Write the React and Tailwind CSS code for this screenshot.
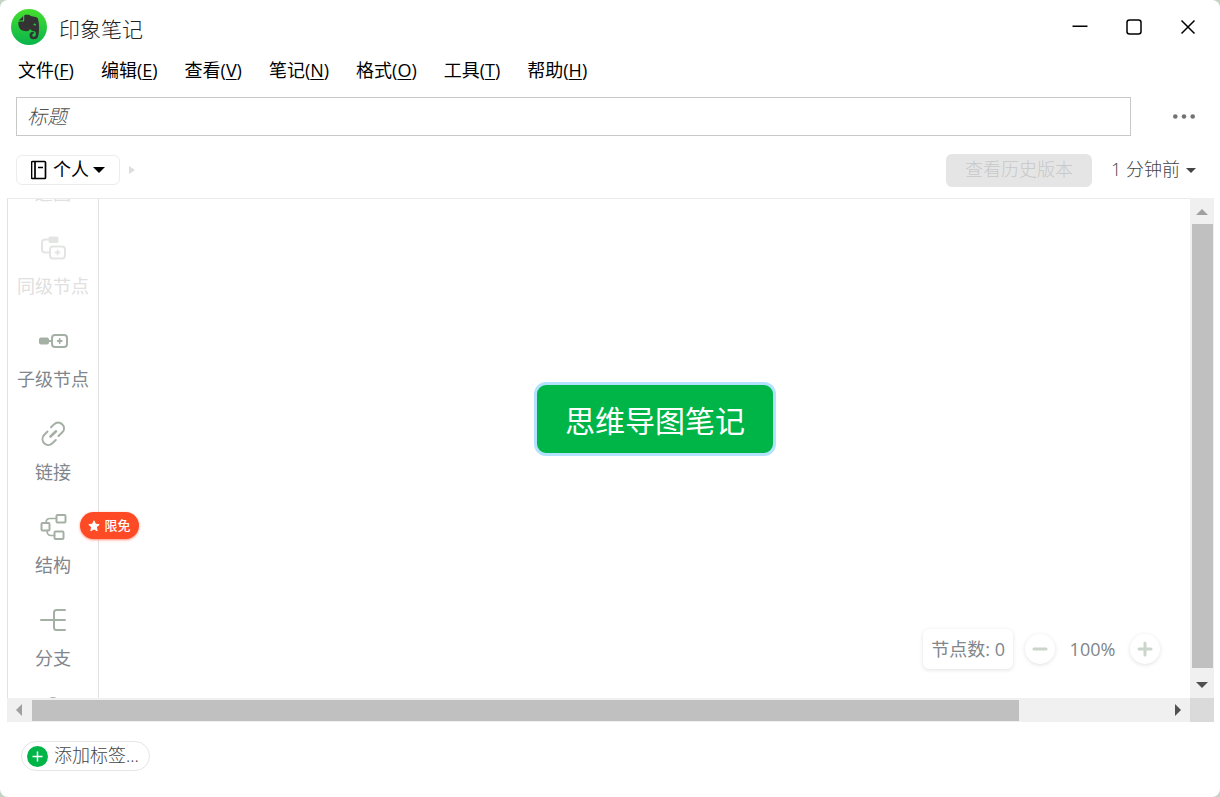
const menus = [
    { label: '文件', key: 'F' },
    { label: '编辑', key: 'E' },
    { label: '查看', key: 'V' },
    { label: '笔记', key: 'N' },
    { label: '格式', key: 'O' },
    { label: '工具', key: 'T' },
    { label: '帮助', key: 'H' },
];

function BrandLogo() {
    return (
        <svg width="36" height="36" viewBox="0 0 36 36" aria-hidden="true">
            <defs>
                <linearGradient id="brand" x1="0" y1="0" x2="0" y2="1">
                    <stop offset="0" stopColor="#45df2e" />
                    <stop offset="1" stopColor="#08b44c" />
                </linearGradient>
            </defs>
            <circle cx="18" cy="18" r="18" fill="url(#brand)" />
            <path
                fill="#333"
                d="M13.2 6.9 C13.2 6 13.9 5.7 15 5.7 H17.4 C18.7 5.7 19.4 6.5 19.7 7.1 L24.6 7.9 C26 8.1 26.8 8.9 27 10 C27.8 13.2 28.3 17 28 20.4 C27.8 23.3 27.7 27 26.4 28.8 C25.4 30.2 23.6 30.3 21.8 30.2 C19.6 30.1 18.5 28.5 18.5 26.3 C18.5 24.2 20 22.8 22 22.8 C22.9 22.8 23.2 23.2 23.2 23.8 C23.2 24.7 21.2 24.4 21.2 26.2 C21.2 27.4 22 27.8 23 27.8 C24.6 27.8 24.9 26.4 24.9 24.6 C24.9 23 24 22 22.4 21.9 C20.6 21.7 19.6 21 19.2 19.7 C18.7 21.3 17.4 22.3 15.4 22.2 C12.2 22.1 10.5 21.6 9.2 20.1 C7.8 18.4 7.2 15.3 7.3 13.4 C7.3 12.8 7.7 12.5 8.3 12.5 H11.6 C12.7 12.5 13.2 12 13.2 10.9 Z"
            />
            <path fill="#333" d="M12.2 6.9 V10.4 C12.2 11.1 11.8 11.5 11.1 11.5 H7.7 Z" />
            <path fill="#25c93b" d="M22.3 16.4 C22.5 15 23.2 14.4 24.1 14.7 C24.9 15 25.2 15.9 25.1 16.8 C24.2 16.4 23.2 16.3 22.3 16.4 Z" />
        </svg>
    );
}

function ToolIcon({ name }) {
    return (
        <svg
            width="32"
            height="32"
            viewBox="0 0 32 32"
            fill="none"
            stroke="currentColor"
            strokeWidth="2"
            strokeLinecap="round"
            strokeLinejoin="round"
            aria-hidden="true"
        >
            {name === 'sibling' && (
                <>
                    <path d="M12 7.5 H8 Q5 7.5 5 10.5 V17.5 Q5 20.5 8 20.5 H12" />
                    <rect x="12.5" y="5.5" width="8" height="4.5" rx="0.5" fill="currentColor" />
                    <rect x="13" y="14.5" width="15" height="12" rx="3" />
                    <path d="M20.5 18.5 V22.5 M18.5 20.5 H22.5" strokeWidth="1.8" />
                </>
            )}
            {name === 'child' && (
                <>
                    <rect x="3" y="13.5" width="8" height="5" rx="1" fill="currentColor" />
                    <path d="M11 16 H15" />
                    <rect x="15" y="10" width="15" height="12" rx="3" />
                    <path d="M22.7 14 V18 M20.7 16 H24.7" strokeWidth="1.8" />
                </>
            )}
            {name === 'link' && (
                <>
                    <path d="M14 9.3 L17 6.4 C19.5 4 22.8 4 25.2 6.3 C27.7 8.8 27.6 12 25.3 14.3 L21.5 18" />
                    <path d="M10.5 13.5 L7.3 16.8 C4.9 19.4 4.9 22.9 7.2 25.3 C9.5 27.5 13 27.5 15.3 25.3 L18.8 22" />
                    <path d="M13.5 18.5 L19 13.3" strokeWidth="2.6" />
                </>
            )}
            {name === 'structure' && (
                <>
                    <rect x="19.5" y="4" width="9" height="7.5" rx="1" />
                    <rect x="4.5" y="12" width="8" height="7.5" rx="1" />
                    <rect x="17.5" y="20.5" width="9" height="7.5" rx="1" />
                    <path d="M9 12 Q9 7.5 13 7.5 H19.5 M10 19.5 Q10 24.5 14 24.5 H17.5" strokeWidth="1.6" />
                </>
            )}
            {name === 'branch' && (
                <path d="M4 16 H28 M28 6 H19.5 Q17 6 17 8.5 V23.5 Q17 26 19.5 26 H28" />
            )}
            {name === 'back' && <path d="M12 9 L5 16 L12 23 M5 16 H27" />}
            {name === 'more' && <circle cx="16" cy="6" r="5" />}
        </svg>
    );
}

const tools = [
    { icon: 'back', label: '返回', disabled: true },
    { icon: 'sibling', label: '同级节点', disabled: true },
    { icon: 'child', label: '子级节点' },
    { icon: 'link', label: '链接' },
    { icon: 'structure', label: '结构', badge: '限免' },
    { icon: 'branch', label: '分支' },
    { icon: 'more' },
];

function TitleBar() {
    return (
        <header className="flex h-14 shrink-0 items-start justify-between pl-[11px] pr-[22px]">
            <div className="flex items-center gap-3 pt-[9px]">
                <BrandLogo />
                <h1 className="pt-1 text-[21px] leading-7 font-light text-[#222]">印象笔记</h1>
            </div>
            <div className="flex gap-[34px] pt-[17px] text-black">
                <button type="button" aria-label="最小化">
                    <svg width="20" height="20" viewBox="0 0 20 20" stroke="currentColor" strokeWidth="1.5">
                        <path d="M2.5 9.2 H17.5" />
                    </svg>
                </button>
                <button type="button" aria-label="最大化">
                    <svg width="20" height="20" viewBox="0 0 20 20" fill="none" stroke="currentColor" strokeWidth="1.5">
                        <rect x="3" y="3" width="14" height="14" rx="2.5" />
                    </svg>
                </button>
                <button type="button" aria-label="关闭">
                    <svg width="20" height="20" viewBox="0 0 20 20" stroke="currentColor" strokeWidth="1.5">
                        <path d="M3.5 3.5 L16.5 16.5 M16.5 3.5 L3.5 16.5" />
                    </svg>
                </button>
            </div>
        </header>
    );
}

function MenuBar() {
    return (
        <nav className="flex h-7 shrink-0 items-center gap-[27px] px-[18px] text-lg leading-none text-black">
            {menus.map((m) => (
                <button key={m.key} type="button">
                    {m.label}(<span className="underline underline-offset-2">{m.key}</span>)
                </button>
            ))}
        </nav>
    );
}

function NoteBar() {
    return (
        <div className="mt-[17px] flex h-[34px] shrink-0 items-center justify-between pl-4 pr-6">
            <div className="flex items-center gap-[9px]">
                <button
                    type="button"
                    className="flex h-[30px] items-center gap-1 rounded-md border border-[#ececec] px-[14px] text-lg leading-none text-black"
                >
                    <svg width="18" height="20" viewBox="2 0 18 20" fill="none" stroke="currentColor" strokeWidth="1.7">
                        <rect x="2.5" y="1.5" width="14" height="17" rx="1" />
                        <path d="M6 1.5 V18.5 M9 7.5 H14" />
                    </svg>
                    <span className="pb-[2px]">个人</span>
                    <svg width="12" height="6" viewBox="0 0 12 6" fill="currentColor">
                        <path d="M0 0 H12 L6 6 Z" />
                    </svg>
                </button>
                <svg width="6" height="8" viewBox="0 0 6 8" fill="#ddd">
                    <path d="M0 0 L6 4 L0 8 Z" />
                </svg>
            </div>
            <div className="flex items-center gap-[19px] text-lg leading-none font-light">
                <button type="button" disabled className="h-[33px] rounded-md bg-[#e5e5e5] px-[19px] pb-[2px] text-[#c8c8c8]">
                    查看历史版本
                </button>
                <button type="button" className="flex items-center gap-[6px] text-[#444]">
                    <span className="pb-[2px]">1 分钟前</span>
                    <svg width="10" height="5" viewBox="0 0 10 5" fill="currentColor">
                        <path d="M0 0 H10 L5 5 Z" />
                    </svg>
                </button>
            </div>
        </div>
    );
}

function Toolbar() {
    return (
        <aside className="z-10 w-[92px] shrink-0 border-x border-[#e2e2e2]">
            {/* scrolled a little, so the first and last tools are only partly in view */}
            <ul className="-mt-[68px]">
                {tools.map((t) => (
                    <li key={t.icon} className="h-[93px]">
                        <button
                            type="button"
                            disabled={t.disabled}
                            className="relative flex w-full flex-col items-center gap-[10px] pt-2 text-[#a5b0a5] disabled:text-[#e3e5e3]"
                        >
                            <ToolIcon name={t.icon} />
                            {t.label && (
                                <span className={t.disabled ? 'text-lg leading-6 text-[#e0e0e0]' : 'text-lg leading-6 text-[#80868b]'}>
                                    {t.label}
                                </span>
                            )}
                            {t.badge && (
                                <span className="absolute left-[72px] top-[9px] flex h-[27px] w-[59px] items-center justify-center gap-1 rounded-full bg-[#ff4a26] text-[13px] font-medium leading-none text-white shadow-sm shadow-[#ff4a26]/50">
                                    <svg width="12" height="12" viewBox="0 0 12 12" fill="currentColor" stroke="currentColor" strokeLinejoin="round">
                                        <path d="M6 0.8 L7.5 4.2 L11.2 4.6 L8.4 7 L9.2 10.8 L6 8.9 L2.8 10.8 L3.6 7 L0.8 4.6 L4.5 4.2 Z" />
                                    </svg>
                                    {t.badge}
                                </span>
                            )}
                        </button>
                    </li>
                ))}
            </ul>
        </aside>
    );
}

function Canvas() {
    return (
        <div className="relative flex-1">
            <div className="absolute left-[435px] top-[183px] rounded-xl border-[3px] border-[#b3e2ff] bg-[#00b548] px-[28px] pt-4 pb-3 text-3xl leading-[40px] text-white">
                思维导图笔记
            </div>
            <div className="absolute bottom-[29px] right-[30px] flex items-center text-lg leading-none text-[#80868b]">
                <span className="mr-3 flex h-10 items-center rounded-md px-2 shadow-[0_1px_4px_rgba(0,0,0,0.12)]">节点数: 0</span>
                <button type="button" aria-label="缩小" className="flex size-[30px] items-center justify-center rounded-full text-[#cbd5cb] shadow-[0_1px_4px_rgba(0,0,0,0.12)]">
                    <svg width="18" height="18" viewBox="0 0 18 18" stroke="currentColor" strokeWidth="3" strokeLinecap="round">
                        <path d="M3 9 H15" />
                    </svg>
                </button>
                <span className="w-[75px] text-center">100%</span>
                <button type="button" aria-label="放大" className="flex size-[30px] items-center justify-center rounded-full text-[#cbd5cb] shadow-[0_1px_4px_rgba(0,0,0,0.12)]">
                    <svg width="18" height="18" viewBox="0 0 18 18" stroke="currentColor" strokeWidth="3" strokeLinecap="round">
                        <path d="M3 9 H15 M9 3 V15" />
                    </svg>
                </button>
            </div>
        </div>
    );
}

function ScrollArrow({ dir, className }) {
    const shapes = {
        up: 'M0 9 L6 3 L12 9 Z',
        down: 'M0 3 L6 9 L12 3 Z',
        left: 'M9 0 L3 6 L9 12 Z',
        right: 'M3 0 L9 6 L3 12 Z',
    };
    return (
        <svg className={className} width="12" height="12" viewBox="0 0 12 12" fill="currentColor" aria-hidden="true">
            <path d={shapes[dir]} />
        </svg>
    );
}

function Editor() {
    return (
        <main className="ml-[7px] mr-[6px] mt-[11px] flex min-h-0 flex-1 flex-col">
            <div className="flex min-h-0 flex-1">
                <div className="flex flex-1 overflow-hidden border-t border-[#ebebeb]">
                    <Toolbar />
                    <Canvas />
                </div>
                <div className="flex w-6 flex-col items-center bg-[#f0f0f0]">
                    <ScrollArrow dir="up" className="mt-2 mb-[6px] text-[#a0a0a0]" />
                    <div className="w-[21px] flex-1 bg-[#c0c0c0]" />
                    <ScrollArrow dir="down" className="mb-[7px] mt-[11px] text-[#505050]" />
                </div>
            </div>
            <div className="flex h-6 shrink-0">
                <div className="flex flex-1 items-center bg-[#f0f0f0]">
                    <ScrollArrow dir="left" className="mr-[7px] ml-[6px] text-[#a0a0a0]" />
                    <div className="flex flex-1">
                        <div className="h-[21px] w-[87%] bg-[#c0c0c0]" />
                    </div>
                    <ScrollArrow dir="right" className="mx-[6px] text-[#505050]" />
                </div>
                <div className="w-6 bg-[#dadada]" />
            </div>
        </main>
    );
}

export default function App() {
    return (
        <div className="bg-[#c3d3c4]">
            <div className="flex h-screen flex-col overflow-hidden rounded-lg bg-white font-['Open_Sans','Noto_Sans_CJK_SC',sans-serif]">
                <TitleBar />
                <MenuBar />
                <div className="mt-[13px] flex shrink-0 items-center gap-[42px] pl-4 pr-[25px]">
                    <input
                        type="text"
                        aria-label="标题"
                        placeholder="标题"
                        className="h-[39px] min-w-0 flex-1 border border-[#c8c8c8] px-[10px] text-xl font-light text-[#333] outline-none placeholder:italic placeholder:text-[#505050]"
                    />
                    <button type="button" aria-label="更多" className="text-[#737373]">
                        <svg width="22" height="22" viewBox="0 0 22 22" fill="currentColor">
                            <circle cx="2.3" cy="10.5" r="2.3" />
                            <circle cx="11" cy="10.5" r="2.3" />
                            <circle cx="19.7" cy="10.5" r="2.3" />
                        </svg>
                    </button>
                </div>
                <NoteBar />
                <Editor />
                <footer className="flex h-[75px] shrink-0 items-start px-[21px] pt-[19px]">
                    <button
                        type="button"
                        className="flex h-[30px] items-center gap-[6px] rounded-full border border-[#e5e5e5] pl-[5px] pr-[10px] text-lg leading-none font-light text-[#444]"
                    >
                        <svg width="21" height="21" viewBox="0 0 21 21">
                            <circle cx="10.5" cy="10.5" r="10.5" fill="#00b548" />
                            <path d="M5.5 10.5 H15.5 M10.5 5.5 V15.5" stroke="#fff" strokeWidth="1.5" />
                        </svg>
                        <span className="pb-[2px]">添加标签...</span>
                    </button>
                </footer>
            </div>
        </div>
    );
}
